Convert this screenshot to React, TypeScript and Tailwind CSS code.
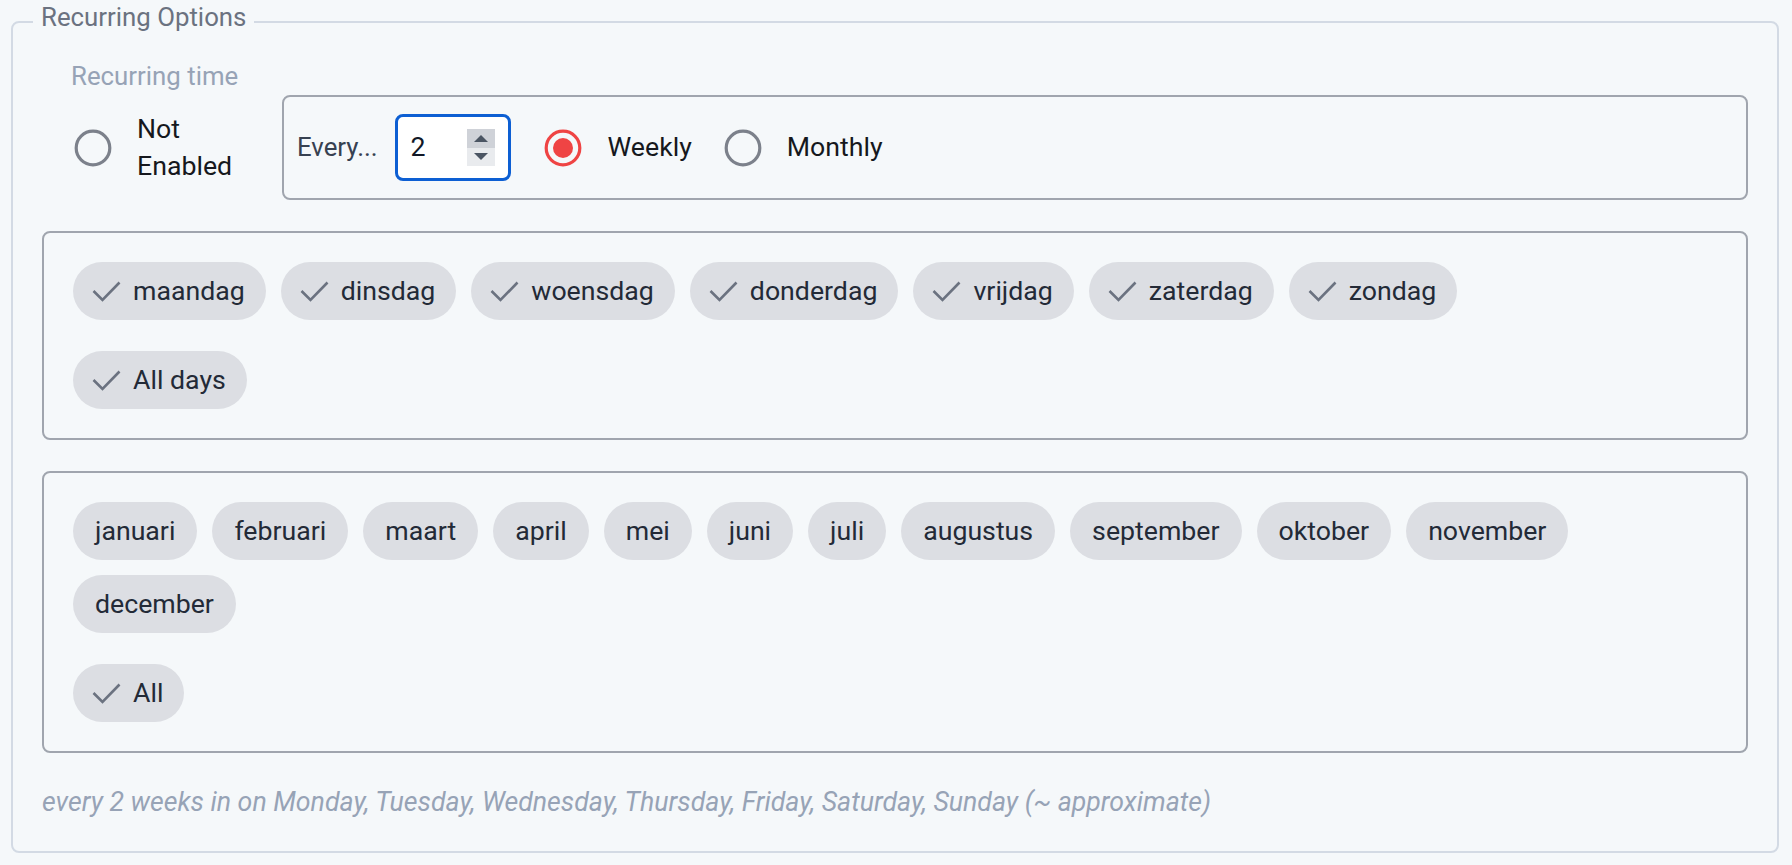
const days = ["maandag", "dinsdag", "woensdag", "donderdag", "vrijdag", "zaterdag", "zondag"];
const months = [
  "januari",
  "februari",
  "maart",
  "april",
  "mei",
  "juni",
  "juli",
  "augustus",
  "september",
  "oktober",
  "november",
  "december",
];

const Check = () => (
  <svg width="29" height="22" viewBox="0 0 29 22" fill="none" className="shrink-0">
    <polyline points="1.5,11 10.5,20 27.5,2.5" stroke="#6b7280" strokeWidth="2.6" />
  </svg>
);

const Chip = ({ label, checked }: { label: string; checked?: boolean }) => (
  <div
    className={
      checked
        ? "flex h-[58px] items-center gap-[12px] rounded-full bg-[#dcdee3] pl-[19px] pr-[21px] text-[#232a37]"
        : "flex h-[58px] items-center rounded-full bg-[#dcdee3] px-[22px] text-[#232a37]"
    }
  >
    {checked && <Check />}
    <span>{label}</span>
  </div>
);

const Radio = ({ checked }: { checked?: boolean }) => (
  <svg width="38" height="38" viewBox="0 0 38 38" className="shrink-0">
    <circle cx="19" cy="19" r="16.8" fill="none" stroke={checked ? "#ef4444" : "#7c818b"} strokeWidth="3.2" />
    {checked && <circle cx="19" cy="19" r="10" fill="#ef4444" />}
  </svg>
);

const NumberBox = () => (
  <div className="flex h-[67px] w-[116px] items-center rounded-[8px] border-[3px] border-[#0d5fd3] bg-white pl-[13px] pr-[13px] text-[#111827]">
    <span>2</span>
    <div className="ml-auto flex h-[37px] w-[28px] flex-col">
      <div className="flex flex-1 items-center justify-center bg-[#cfd2d8]">
        <svg width="14" height="7" viewBox="0 0 14 7">
          <polygon points="0,7 7,0 14,7" fill="#4b5563" />
        </svg>
      </div>
      <div className="flex flex-1 items-center justify-center bg-[#e9ebee]">
        <svg width="14" height="7" viewBox="0 0 14 7">
          <polygon points="0,0 14,0 7,7" fill="#4b5563" />
        </svg>
      </div>
    </div>
  </div>
);

export default function App() {
  return (
    <div className="min-h-[865px] bg-[#f5f8fa] pl-[11px] pr-[13px] font-['Roboto',sans-serif] text-[26.7px] leading-[37px]">
      <fieldset className="rounded-[8px] border-2 border-[#d3dae4] px-[29px] pb-[30px]">
        <legend className="ml-[-9px] px-[8px] text-[25.8px] leading-[43px] text-[#6b7280]">
          <span className="relative -top-[4px]">Recurring Options</span>
        </legend>

        <div className="mt-[15px] pl-[29px] text-[25.8px] text-[#97a3b6]">Recurring time</div>

        <div className="flex items-center">
          <div className="flex items-center gap-[25px] pl-[32px] pr-[45px] text-[#16181d]">
            <Radio />
            <span className="w-[100px]">Not Enabled</span>
          </div>
          <div className="flex h-[105px] flex-1 items-center rounded-[8px] border-2 border-[#a0a5ae] pl-[13px]">
            <span className="mr-[17px] text-[25.8px] text-[#374151]">Every...</span>
            <NumberBox />
            <div className="ml-[33px] flex items-center gap-[26px] text-[#16181d]">
              <Radio checked />
              <span>Weekly</span>
            </div>
            <div className="ml-[32px] flex items-center gap-[25px] text-[#16181d]">
              <Radio />
              <span>Monthly</span>
            </div>
          </div>
        </div>

        <div className="mt-[31px] flex flex-col gap-[31px] rounded-[8px] border-2 border-[#a0a5ae] p-[29px]">
          <div className="flex flex-wrap gap-[15px]">
            {days.map((d) => (
              <Chip key={d} label={d} checked />
            ))}
          </div>
          <div className="flex">
            <Chip label="All days" checked />
          </div>
        </div>

        <div className="mt-[31px] flex flex-col gap-[31px] rounded-[8px] border-2 border-[#a0a5ae] p-[29px]">
          <div className="flex flex-wrap gap-[15px]">
            {months.map((m) => (
              <Chip key={m} label={m} />
            ))}
          </div>
          <div className="flex">
            <Chip label="All" checked />
          </div>
        </div>

        <p className="mt-[31px] italic text-[#97a3b6]">
          every 2 weeks in on Monday, Tuesday, Wednesday, Thursday, Friday, Saturday, Sunday (~ approximate)
        </p>
      </fieldset>
    </div>
  );
}
